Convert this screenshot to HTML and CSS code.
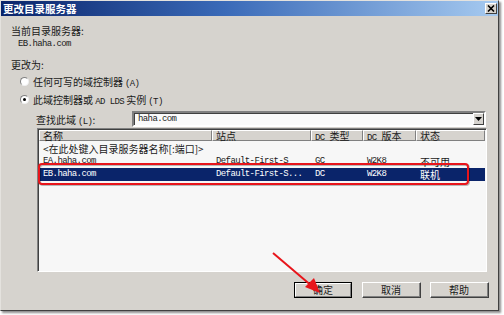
FILE: index.html
```html
<!DOCTYPE html>
<html>
<head>
<meta charset="utf-8">
<link rel="stylesheet" href="styles.css">
</head>
<body>
<div class="window">
  <div class="titlebar">
    <span class="title">更改目录服务器</span>
    <span class="close"><svg width="8" height="7" viewBox="0 0 8 7"><path d="M1 0.5 L7 6.5 M7 0.5 L1 6.5" stroke="#000" stroke-width="1.6"/></svg></span>
  </div>
  <div class="content">
    <div class="label current">当前目录服务器:</div>
    <div class="server m">EB.haha.com</div>
    <div class="label change">更改为:</div>
    <div class="radio-row first"><span class="radio"></span><span>任何可写的域控制器<span class="m sp">(A)</span></span></div>
    <div class="radio-row"><span class="radio checked"></span><span>此域控制器或 <span class="m">AD LDS</span> 实例<span class="m sp">(T)</span></span></div>
    <div class="find-row">
      <span class="find-label">查找此域<span class="m sp">(L)</span>:</span>
      <div class="combo"><span class="combo-text m">haha.com</span><span class="drop"><svg width="7" height="4" viewBox="0 0 7 4"><path d="M0 0 H7 L3.5 4 Z" fill="#000"/></svg></span></div>
    </div>
    <div class="list">
      <div class="header">
        <span class="hc c1">名称</span>
        <span class="hc c2">站点</span>
        <span class="hc c3"><span class="m dc">DC</span>类型</span>
        <span class="hc c4"><span class="m dc">DC</span>版本</span>
        <span class="hc c5">状态</span>
      </div>
      <div class="rows">
        <div class="row"><span class="cell wide">&lt;在此处键入目录服务器名称[:端口]&gt;</span></div>
        <div class="row">
          <span class="cell c1 m">EA.haha.com</span>
          <span class="cell c2 m">Default-First-S</span>
          <span class="cell c3 m">GC</span>
          <span class="cell c4 m">W2K8</span>
          <span class="cell c5">不可用</span>
        </div>
        <div class="row selected">
          <span class="cell c1 m">EB.haha.com</span>
          <span class="cell c2 m">Default-First-S...</span>
          <span class="cell c3 m">DC</span>
          <span class="cell c4 m">W2K8</span>
          <span class="cell c5">联机</span>
        </div>
      </div>
    </div>
    <div class="buttons">
      <span class="btn default ok"><span class="btn-inner">确定</span></span>
      <span class="btn cancel"><span class="btn-inner">取消</span></span>
      <span class="btn"><span class="btn-inner">帮助</span></span>
    </div>
  </div>
</div>
<svg class="overlay" width="504" height="315" viewBox="0 0 504 315">
  <rect x="39" y="164" width="429" height="20" rx="3" ry="3" fill="none" stroke="rgba(0,0,0,0.25)" stroke-width="2" transform="translate(1,1)"/>
  <rect x="39" y="164" width="429" height="20" rx="3" ry="3" fill="none" stroke="#e8151b" stroke-width="2"/>
  <line x1="273" y1="253" x2="313" y2="287" stroke="#e8151b" stroke-width="2"/>
  <path d="M320 293 L305 287 L314 278 Z" fill="#e8151b"/>
</svg>
</body>
</html>
```
FILE: styles.css
```css
html, body {
  margin: 0;
  padding: 0;
  background: #ffffff;
}
body {
  width: 504px;
  height: 315px;
  position: relative;
  overflow: hidden;
}
.window {
  width: 499px;
  height: 311px;
  box-sizing: border-box;
  background: #d6d3ce;
  border: 1px solid;
  border-color: #e4e2de #404040 #404040 #e4e2de;
  box-shadow: 2px 2px 2px rgba(0, 0, 0, 0.45);
  display: flex;
  flex-direction: column;
  font-family: "Noto Sans CJK SC", sans-serif;
  font-size: 10px;
  color: #1a1a1a;
}
.m {
  font-family: "Liberation Mono", monospace;
  font-size: 9px;
  letter-spacing: -0.6px;
}
.sp {
  margin-left: 2px;
}
.dc {
  margin-right: 5px;
}
.titlebar {
  height: 15px;
  flex: none;
  background: linear-gradient(to right, #0a246a 0%, #3a6ab8 45%, #a6caf0 100%);
  display: flex;
  align-items: center;
  justify-content: space-between;
  padding: 0 1px 0 2px;
}
.title {
  color: #fff;
  font-weight: bold;
  font-size: 10.5px;
  line-height: 15px;
}
.close {
  width: 12px;
  height: 11px;
  box-sizing: border-box;
  background: #d6d3ce;
  border: 1px solid;
  border-color: #fff #404040 #404040 #fff;
  display: flex;
  align-items: center;
  justify-content: center;
}
.content {
  display: flex;
  flex-direction: column;
  padding: 0 9px 0 10px;
}
.label {
  line-height: 12px;
}
.current {
  margin-top: 9px;
}
.server {
  margin-top: 1px;
  margin-left: 7px;
  line-height: 12px;
}
.change {
  margin-top: 9px;
}
.radio-row {
  display: flex;
  align-items: center;
  height: 14px;
  margin-top: 4px;
  margin-left: 9px;
  gap: 4px;
}
.radio-row.first {
  margin-top: 3px;
}
.radio {
  width: 9px;
  height: 9px;
  box-sizing: border-box;
  border-radius: 50%;
  background: #fff;
  border: 1px solid;
  border-color: #808080 #f0f0f0 #f0f0f0 #808080;
  display: flex;
  align-items: center;
  justify-content: center;
}
.radio.checked::after {
  content: "";
  width: 3px;
  height: 3px;
  border-radius: 50%;
  background: #000;
}
.find-row {
  display: flex;
  align-items: center;
  margin-top: 5px;
  margin-left: 25px;
}
.find-label {
  width: 96px;
}
.combo {
  width: 354px;
  height: 16px;
  box-sizing: border-box;
  background: #fafafa;
  border: 2px solid;
  border-color: #808080 #fff #fff #808080;
  box-shadow: inset 1px 1px 0 #404040;
  display: flex;
  align-items: center;
  justify-content: space-between;
}
.combo-text {
  padding-left: 4px;
}
.drop {
  width: 11px;
  height: 12px;
  box-sizing: border-box;
  background: #d6d3ce;
  border: 1px solid;
  border-color: #fff #404040 #404040 #fff;
  display: flex;
  align-items: center;
  justify-content: center;
}
.list {
  margin-top: 1px;
  margin-left: 26px;
  width: 450px;
  height: 144px;
  box-sizing: border-box;
  background: #f7f7f7;
  border: 1px solid;
  border-color: #808080 #fff #fff #808080;
  box-shadow: inset 1px 1px 0 #404040;
  padding: 1px 1px 0 1px;
}
.header {
  display: flex;
  height: 11px;
}
.hc {
  box-sizing: border-box;
  background: #d6d3ce;
  border: 1px solid;
  border-color: #fff #808080 #808080 #fff;
  line-height: 9px;
  padding-left: 3px;
  white-space: nowrap;
  overflow: visible;
}
.c1 { width: 173px; }
.c2 { width: 99px; }
.c3 { width: 52px; }
.c4 { width: 53px; }
.c5 { flex: 1; }
.rows {
  padding-top: 1px;
}
.row {
  display: flex;
  height: 13px;
  line-height: 13px;
  white-space: nowrap;
}
.cell {
  box-sizing: border-box;
  padding-left: 4px;
  overflow: hidden;
}
.row.selected {
  background: #0a246a;
  color: #fff;
}
.buttons {
  display: flex;
  justify-content: flex-end;
  margin-top: 10px;
}
.btn {
  height: 16px;
  width: 59px;
  box-sizing: border-box;
  border: 1px solid;
  border-color: #fff #404040 #404040 #fff;
  background: #d6d3ce;
  display: flex;
}
.btn-inner {
  flex: 1;
  box-sizing: border-box;
  border-right: 1px solid #808080;
  border-bottom: 1px solid #808080;
  display: flex;
  align-items: center;
  justify-content: center;
  line-height: 12px;
}
.btn.default {
  width: 58px;
  border: 1px solid #000;
}
.btn.default .btn-inner {
  border: 1px solid;
  border-color: #fff #808080 #808080 #fff;
}
.ok {
  margin-right: 10px;
}
.cancel {
  margin-right: 9px;
}
.overlay {
  position: absolute;
  left: 0;
  top: 0;
  pointer-events: none;
}
```
